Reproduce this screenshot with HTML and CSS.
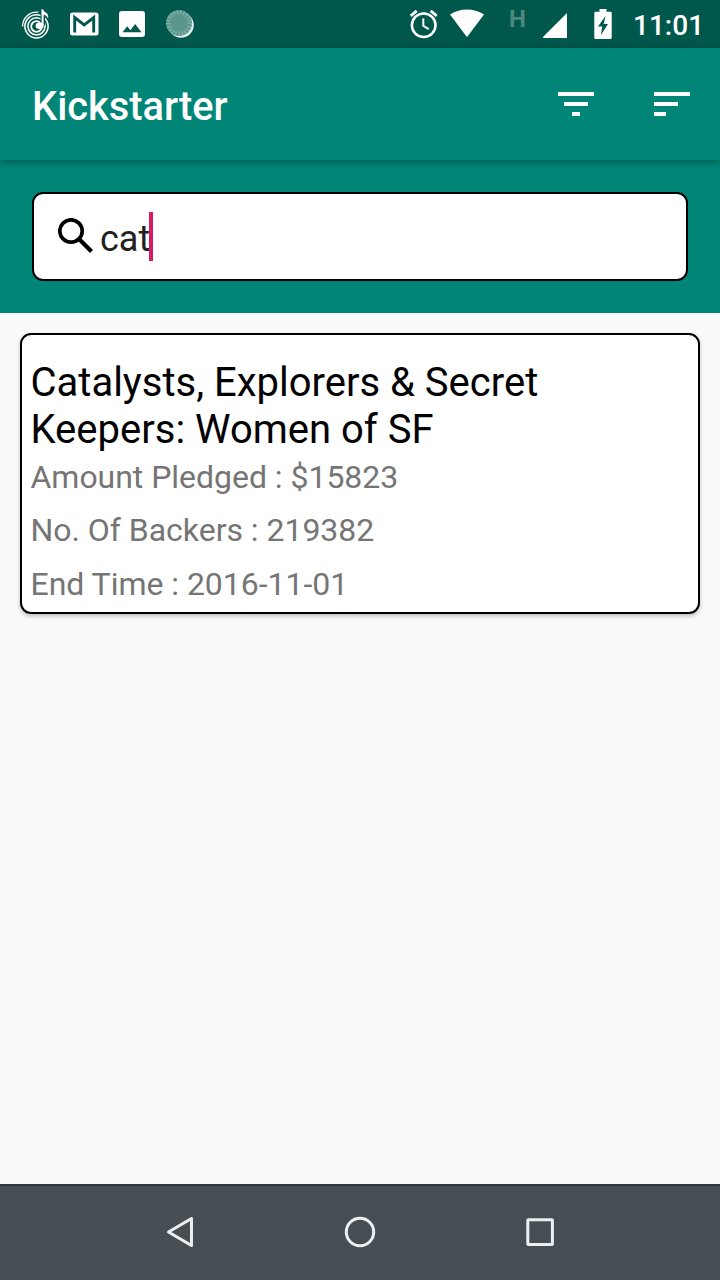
FILE: index.html
```html
<!DOCTYPE html>
<html lang="en">
<head>
<meta charset="utf-8">
<title>Kickstarter</title>
<link rel="stylesheet" href="styles.css">
</head>
<body>
<div class="screen">
  <header class="status">
    <div class="status-group notifications">
      <svg width="32" height="48" viewBox="20 0 32 48" fill="none" stroke="#fff" stroke-width="1.500">
        <circle cx="36.500" cy="26.300" r="11.600"/>
        <circle cx="36.500" cy="26.300" r="8.600"/>
        <circle cx="36.500" cy="26.500" r="5.300" stroke-width="1.800"/>
        <path d="M22.600 26.500A14 14 0 0 1 38.500 12.200" stroke-width="1.300"/>
        <path d="M42.800 25.500V10" stroke="#00574b" stroke-width="4.500"/>
        <path d="M42.600 26V9.500" stroke-width="2"/>
        <path d="M41.700 8.800c1.500 3.200 7.700 3.700 6.400 9.600-1.200-2.700-3.200-3.700-6.400-4z" fill="#fff" stroke="none"/>
        <ellipse cx="39.600" cy="25.800" rx="4" ry="3.300" fill="#fff" stroke="none"/>
      </svg>
      <svg width="32" height="48" viewBox="68 0 32 48">
        <rect x="70" y="12.500" width="28.500" height="23" rx="2.500" fill="#fff"/>
        <path d="M74.700 32.500V17.500L84.200 25l9.500-7.500v15" fill="none" stroke="#00574b" stroke-width="2.900"/>
      </svg>
      <svg width="32" height="48" viewBox="116 0 32 48">
        <rect x="119" y="11" width="26" height="26" rx="3" fill="#fff"/>
        <path d="M122.500 32.300l4.700-6 3.300 4 4.600-6.300 6.400 8.300z" fill="#00574b"/>
      </svg>
      <svg width="32" height="48" viewBox="164 0 32 48">
        <circle cx="181" cy="25" r="12.800" fill="#e3efed"/>
        <circle cx="179" cy="23" r="13" fill="#5a968c"/>
        <circle cx="179" cy="23" r="10.700" fill="none" stroke="#86b2aa" stroke-width="4" stroke-dasharray="1.300 1.900"/>
      </svg>
    </div>
    <div class="status-group system">
      <svg width="32" height="48" viewBox="408 0 32 48" fill="none" stroke="#fff">
        <circle cx="423.700" cy="25.300" r="11.800" stroke-width="2.500"/>
        <path d="M423.300 18.500v7.300l5.400 3.400" stroke-width="2"/>
        <path d="M410.700 15.800l6-4.900M436.700 15.800l-6-4.900" stroke-width="2.800"/>
      </svg>
      <svg class="wifi" width="36" height="48" viewBox="449 0 36 48"><path d="M450 14.500Q458 9.500 467 9.500T484 14.500L467.500 36.500q-.5.700-1 0z" fill="#fff"/></svg>
      <span class="network">H</span>
      <svg class="signal" width="26" height="48" viewBox="542 0 26 48"><path d="M567 13v25h-23.500q-1-.5-.3-1.300z" fill="#fff"/></svg>
      <svg class="battery" width="20" height="48" viewBox="593 0 20 48">
        <path d="M599.500 9h7v2.800h4q1.200 0 1.200 1.200v24.800q0 1.200-1.200 1.200h-15q-1.200 0-1.200-1.200V13q0-1.200 1.200-1.200h4z" fill="#fff"/>
        <path d="M605.500 16l-7.500 10.500h4.200L601 35l7-11h-4.300z" fill="#00574b"/>
      </svg>
      <span class="clock">11:01</span>
    </div>
  </header>
  <div class="toolbar">
    <h1 class="title">Kickstarter</h1>
    <div class="actions">
      <svg width="36" height="24" viewBox="0 0 36 24" fill="#fff"><path d="M0 0h36v4H0zM6 10h24v4H6zM14 20h8v4h-8z"/></svg>
      <svg width="36" height="24" viewBox="0 0 36 24" fill="#fff"><path d="M0 0h36v4H0zM0 10h24v4H0zM0 20h12v4H0z"/></svg>
    </div>
  </div>
  <div class="search">
    <div class="field">
      <svg width="36" height="36" viewBox="0 0 36 36" fill="none" stroke="#000"><circle cx="13" cy="13" r="11.200" stroke-width="3.700"/><path d="M21 21l12.500 12.500" stroke-width="4.200"/></svg>
      <span class="query">cat</span><span class="caret"></span>
    </div>
  </div>
  <main class="results">
    <article class="card">
      <h2 class="name">Catalysts, Explorers &amp; Secret Keepers: Women of SF</h2>
      <p class="meta">Amount Pledged : $15823</p>
      <p class="meta">No. Of Backers : 219382</p>
      <p class="meta">End Time : 2016-11-01</p>
    </article>
  </main>
  <nav class="navbar">
    <svg width="32" height="32" viewBox="0 0 32 32"><path d="M4.500 16L27.500 2.500v27z"/></svg>
    <svg width="32" height="32" viewBox="0 0 32 32"><circle cx="16" cy="16" r="13.700"/></svg>
    <svg width="32" height="32" viewBox="0 0 32 32"><rect x="3.800" y="3.800" width="24.600" height="24.600" rx=".5"/></svg>
  </nav>
</div>
</body>
</html>
```

FILE: styles.css
```css
* { box-sizing: border-box; }
body { margin: 0; font-family: Roboto, sans-serif; }
svg { display: block; flex: none; }
h1, h2, p { margin: 0; font-weight: 400; }
.screen { width: 720px; height: 1280px; display: flex; flex-direction: column; background: #fafafa; overflow: hidden; }
.status { height: 48px; flex: none; display: flex; justify-content: space-between; padding: 0 17px 0 20px; background: #00574b; color: #fff; }
.status-group { display: flex; }
.notifications { gap: 16px; }
.wifi { margin-left: 9px; }
.network { margin-left: 24px; width: 18px; padding-top: 6px; font-size: 24px; line-height: 26px; font-weight: 700; color: #4d8981; }
.signal { margin-left: 15px; }
.battery { margin-left: 25px; }
.clock { margin-left: 20px; width: 70px; font-size: 28px; line-height: 52px; font-weight: 500; white-space: nowrap; }
.toolbar { height: 112px; flex: none; display: flex; align-items: center; justify-content: space-between; padding: 0 30px 0 32px; background: #008577; box-shadow: 0 2px 7px rgba(0, 0, 0, .32); z-index: 1; }
.title { color: #fff; font-size: 39.800px; line-height: 48px; font-weight: 500; padding-top: 5px; }
.actions { display: flex; gap: 60px; }
.search { height: 153px; flex: none; padding: 32px; background: #008577; }
.field { height: 89px; display: flex; align-items: center; padding-left: 24px; background: #fff; border: 2px solid #000; border-radius: 11px; }
.field svg { margin-bottom: 1px; }
.query { margin-left: 6px; font-size: 36px; line-height: 48px; color: #212121; padding-top: 5px; }
.caret { width: 4px; height: 49px; margin-left: -1px; background: #d81b60; }
.results { flex: 1; padding: 20px; }
.card { height: 281px; padding: 23px 8.500px 0; background: #fff; border: 2px solid #000; border-radius: 11px; box-shadow: 0 2px 4px rgba(0, 0, 0, .25); }
.name { width: 560px; padding-top: 1px; margin-bottom: -2px; font-size: 40px; line-height: 47px; color: #000; }
.meta { font-size: 32px; line-height: 53.300px; letter-spacing: -.03px; color: #757575; }
.navbar { height: 96px; flex: none; display: flex; justify-content: center; align-items: center; gap: 148px; padding-bottom: 2px; background: #464e54; border-top: 2px solid #30373c; }
.navbar svg { fill: none; stroke: #eceff1; stroke-width: 3; stroke-linejoin: round; }
```
